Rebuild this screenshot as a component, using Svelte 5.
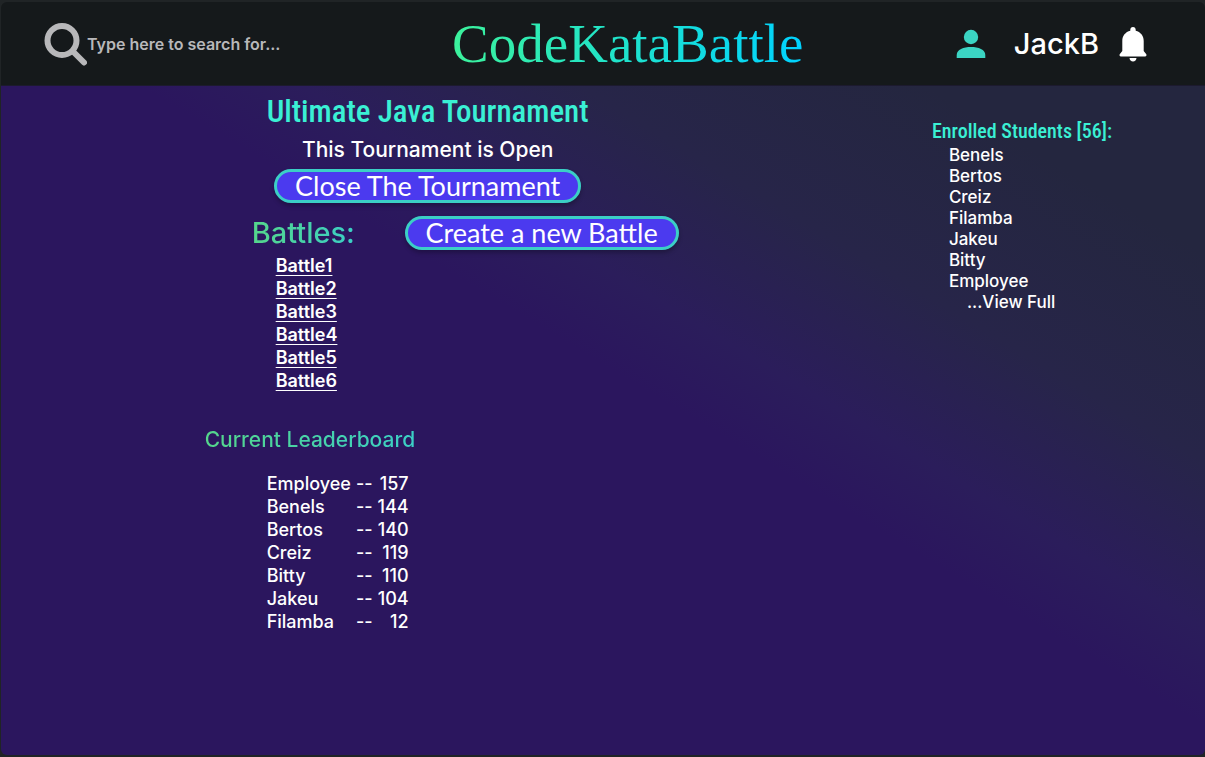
<script>
  const battles = ['Battle1', 'Battle2', 'Battle3', 'Battle4', 'Battle5', 'Battle6'];
  const students = ['Benels', 'Bertos', 'Creiz', 'Filamba', 'Jakeu', 'Bitty', 'Employee'];
  const scores = [
    ['Employee', 157],
    ['Benels', 144],
    ['Bertos', 140],
    ['Creiz', 119],
    ['Bitty', 110],
    ['Jakeu', 104],
    ['Filamba', 12]
  ];
  let query = $state('');
</script>

<div class="page">
  <header>
    <label class="search">
      <svg width="43" height="44" viewBox="0 0 43 44" fill="none" stroke="#b8b8ba" aria-hidden="true">
        <circle cx="18" cy="18.500" r="14.500" stroke-width="6" />
        <path d="M29 29.500L40 40.500" stroke-width="6" stroke-linecap="round" />
      </svg>
      <input type="text" bind:value={query} aria-label="Search" placeholder="Type here to search for..." />
    </label>
    <a class="logo" href="#home">CodeKataBattle</a>
    <div class="account">
      <svg width="30" height="30" viewBox="0 0 30 30" fill="#3bd4c3" aria-hidden="true">
        <circle cx="15" cy="8" r="7.200" />
        <path d="M0.700 29V26C0.700 20.500 7.500 18 15 18S29.300 20.500 29.300 26V29Z" />
      </svg>
      <a class="user" href="#profile">JackB</a>
      <button class="bell" aria-label="Notifications">
        <svg width="28" height="36" viewBox="0 0 28 36" fill="#fff" aria-hidden="true">
          <path d="M14 1C12.300 1 11.300 2.200 11.300 3.700V4.800C6.500 6 3.300 9.800 3.300 15V25L0.700 28.300C0.200 29.300 0.700 30.500 1.900 30.500H26.100C27.300 30.500 27.800 29.300 27.300 28.300L24.700 25V15C24.700 9.800 21.500 6 16.700 4.800V3.700C16.700 2.200 15.700 1 14 1Z" />
          <path d="M10.500 32H17.500C17.300 34.200 16 35.500 14 35.500S10.700 34.200 10.500 32Z" />
        </svg>
      </button>
    </div>
  </header>

  <main>
    <div class="content">
      <section class="hero">
        <h1>Ultimate Java Tournament</h1>
        <p>This Tournament is Open</p>
        <button class="pill">Close The Tournament</button>
      </section>

      <section class="battles">
        <div class="bar">
          <h2 class="tint">Battles:</h2>
          <button class="pill">Create a new Battle</button>
        </div>
        <ul>
          {#each battles as battle}
            <li><a href="#{battle}">{battle}</a></li>
          {/each}
        </ul>
      </section>

      <section class="board">
        <h3 class="tint">Current Leaderboard</h3>
        <table>
          <tbody>
            {#each scores as [name, score]}
              <tr><th scope="row">{name}</th><td>--</td><td>{score}</td></tr>
            {/each}
          </tbody>
        </table>
      </section>
    </div>

    <aside>
      <h2>Enrolled Students [56]:</h2>
      <ul>
        {#each students as student}
          <li>{student}</li>
        {/each}
      </ul>
      <a href="#students">...View Full</a>
    </aside>
  </main>
</div>

<style>
  :global(body) {
    margin: 0;
    background: #202426;
  }
  .page {
    box-sizing: border-box;
    min-height: 100vh;
    padding: 2px 0 2px 1px;
    display: flex;
    flex-direction: column;
    color: #fff;
    font-family: Lato, sans-serif;
  }
  h1, h2, h3, p, ul {
    margin: 0;
    padding: 0;
  }
  ul {
    list-style: none;
  }
  a {
    color: inherit;
    text-decoration: none;
  }
  button {
    border: 0;
    padding: 0;
    background: none;
    color: inherit;
    font: inherit;
    cursor: pointer;
  }
  svg {
    display: block;
    flex: none;
  }
  header {
    box-sizing: border-box;
    height: 84px;
    padding: 0 58px 0 43px;
    display: flex;
    align-items: center;
    background: #15191b;
    border-radius: 6px 6px 0 0;
    border-bottom: 1px solid #1c1a2e;
  }
  .search {
    flex: 0 0 37%;
    display: flex;
    align-items: center;
  }
  .search input {
    flex: 1;
    min-width: 0;
    border: 0;
    padding: 0;
    background: none;
    outline: none;
    color: #b8b8ba;
    font: 600 16px Inter, sans-serif;
  }
  .search input::placeholder {
    color: #b8b8ba;
    opacity: 1;
  }
  .logo {
    font: 400 55px/80px "Liberation Serif", serif;
    background: linear-gradient(90deg, #3cf29c, #00d2ff);
    background-clip: text;
    color: transparent;
  }
  .account {
    margin-left: auto;
    display: flex;
    align-items: center;
  }
  .user {
    margin: 0 20px 0 28px;
    font: 500 29px/36px Inter, sans-serif;
  }
  main {
    flex: 1;
    display: flex;
    justify-content: space-between;
    padding: 0 93px 24px 17%;
    border-radius: 0 0 6px 6px;
    background: linear-gradient(211deg, #24263f 12%, #272549 27%, #2b1d5b 39%, #2b165e 46%);
  }
  .content {
    flex: 0 0 474px;
    margin-left: -1px;
  }
  .hero {
    width: 446px;
    display: flex;
    flex-direction: column;
    align-items: center;
  }
  h1 {
    color: #3af0d4;
    font: 500 31px/52px "Roboto Condensed", sans-serif;
  }
  .hero p {
    margin-bottom: 7px;
    font: 500 21px/24px Inter, sans-serif;
  }
  .pill {
    box-sizing: border-box;
    height: 34px;
    padding: 0 18px;
    border: 3px solid #3bcfc6;
    border-radius: 17px;
    background: #4b3aef;
    box-shadow: 0 3px 4px rgb(0 0 0 / 25%);
    font: 400 27px/28px Lato, sans-serif;
    white-space: nowrap;
  }
  .bar {
    display: flex;
    align-items: center;
    justify-content: space-between;
    margin-top: 12px;
    padding-left: 47px;
  }
  .tint {
    width: fit-content;
    background: linear-gradient(90deg, #55d68b, #3bcfc6);
    background-clip: text;
    color: transparent;
  }
  .bar h2 {
    font: 500 29px/36px Inter, sans-serif;
  }
  .battles ul {
    padding: 3px 0 0 71px;
    font: 600 18px/23px Inter, sans-serif;
  }
  .battles a {
    text-decoration: underline;
    text-decoration-thickness: 1px;
    text-underline-offset: 3px;
  }
  .board {
    margin-top: 36px;
  }
  .board h3 {
    font: 500 21px/24px Inter, sans-serif;
  }
  table {
    margin: 20px 0 0 62px;
    border-collapse: collapse;
    font: 500 18px/23px Inter, sans-serif;
  }
  th, td {
    padding: 0;
    font-weight: 500;
    text-align: right;
  }
  th {
    padding-right: 5px;
    text-align: left;
  }
  td:last-child {
    padding-left: 5px;
  }
  aside {
    padding-top: 33px;
    font: 500 17px/21px Inter, sans-serif;
  }
  aside h2 {
    color: #3af0d4;
    font: 500 20px/24px "Roboto Condensed", sans-serif;
    padding-bottom: 2px;
  }
  aside ul {
    padding-left: 17px;
  }
  aside a {
    margin-left: 35px;
  }
</style>
